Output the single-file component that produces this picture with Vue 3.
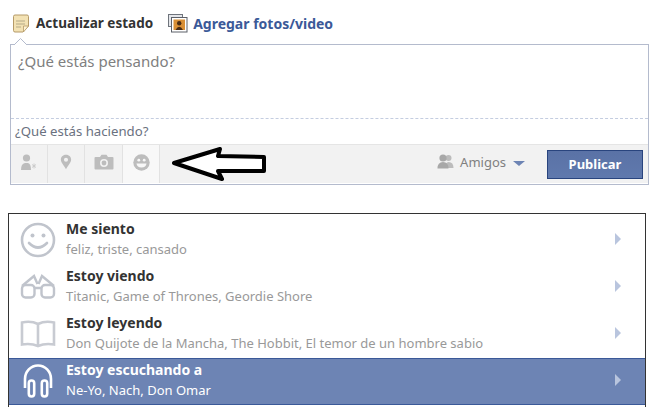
<template>
  <div class="page">
    <div class="tabs">
      <div class="tab tab--active">
        <svg class="tab__icon" width="18" height="19" viewBox="0 0 18 19">
          <path d="M1.5 2.5 Q1.5 1 3 1 H15 Q16.5 1 16.5 2.5 V12 L11 18 H3 Q1.5 18 1.5 16.5 Z" fill="#f3e2b4" stroke="#b59a68" />
          <path d="M4 7 H13 M4 10 H13 M4 13 H9" stroke="#b5a988" stroke-width="1.2" />
          <path d="M16.5 12 H11.5 V18 Z" fill="#fff4d6" stroke="#b59a68" stroke-width=".8" />
        </svg>
        <span>Actualizar estado</span>
      </div>
      <div class="tab tab--link">
        <svg class="tab__icon" width="20" height="19" viewBox="0 0 20 19">
          <rect x=".5" y=".5" width="14" height="12" fill="#e4e6ea" stroke="#6f747c" />
          <rect x="3.5" y="3.5" width="15.5" height="14.5" fill="#fff" stroke="#5c6068" />
          <rect x="5.5" y="5.5" width="11.5" height="10.5" fill="#d98f35" />
          <circle cx="11.2" cy="9.2" r="2.2" fill="#4a2c14" />
          <path d="M7.5 16 Q11.2 9.5 15 16 Z" fill="#4a2c14" />
        </svg>
        <span>Agregar fotos/video</span>
      </div>
    </div>

    <div class="composer">
      <svg class="composer__caret" width="13" height="7" viewBox="0 0 13 7">
        <path d="M0 7 L6.5 .5 L13 7" fill="#fff" stroke="#b4bbcd" />
      </svg>
      <div class="composer__input">¿Qué estás pensando?</div>
      <div class="composer__doing">¿Qué estás haciendo?</div>
      <div class="composer__bar">
        <div class="tool">
          <svg width="18" height="18" viewBox="0 0 18 18" fill="#bdbdbd">
            <circle cx="6.5" cy="5" r="3.6" />
            <path d="M1 17 Q1 10.5 5 10 H8 Q11 10.5 11 17 Z" />
            <path d="M14 10.5 V15.5 M12 11.5 L16 14.5 M16 11.5 L12 14.5" stroke="#c8c8c8" stroke-width=".9" />
          </svg>
        </div>
        <div class="tool">
          <svg width="12" height="18" viewBox="0 0 14 18">
            <path fill-rule="evenodd" d="M7 .5 C3 .5 1 3.4 1 6.2 C1 10 5 13.5 7 17.5 C9 13.5 13 10 13 6.2 C13 3.4 11 .5 7 .5 Z M7 4 A2.4 2.4 0 1 1 7 8.8 A2.4 2.4 0 1 1 7 4 Z" fill="#bdbdbd" />
          </svg>
        </div>
        <div class="tool tool--wide">
          <svg width="20" height="16" viewBox="0 0 20 16">
            <path fill-rule="evenodd" d="M1.5 3 H6 L7.5 .8 H12.5 L14 3 H18.5 Q19.5 3 19.5 4 V14.5 Q19.5 15.5 18.5 15.5 H1.5 Q.5 15.5 .5 14.5 V4 Q.5 3 1.5 3 Z M10 5 A4 4 0 1 0 10 13 A4 4 0 1 0 10 5 Z" fill="#bdbdbd" />
            <circle cx="10" cy="9" r="2.4" fill="#bdbdbd" />
          </svg>
        </div>
        <div class="tool tool--on">
          <svg width="17" height="17" viewBox="0 0 17 17">
            <circle cx="8.5" cy="8.5" r="8.2" fill="#bdbdbd" />
            <circle cx="5.8" cy="6.2" r="1.4" fill="#f8f8f8" />
            <circle cx="11.2" cy="6.2" r="1.4" fill="#f8f8f8" />
            <path d="M3.5 9.5 H13.5 Q13 13.5 8.5 13.5 Q4 13.5 3.5 9.5 Z" fill="#f8f8f8" />
          </svg>
        </div>
        <div class="composer__spacer"></div>
        <div class="audience">
          <svg width="17" height="15" viewBox="0 0 17 15" fill="#a8a8a8">
            <circle cx="11.5" cy="4" r="3" fill="#bcbcbc" />
            <path d="M8 14 Q8 8 11.5 8 Q16.5 8 16.5 14 Z" fill="#bcbcbc" />
            <circle cx="6" cy="4" r="3.6" />
            <path d="M.5 14.5 Q.5 8 6 8 Q11.5 8 11.5 14.5 Z" />
          </svg>
          <span class="audience__label">Amigos</span>
          <i class="audience__caret"></i>
        </div>
        <button class="publish" type="button">Publicar</button>
      </div>
    </div>

    <ul class="menu">
      <li v-for="item in items" :key="item.title" class="menu__row" :class="{ 'menu__row--on': item.active }">
        <div class="menu__icon">
          <svg v-if="item.icon === 'smile'" width="36" height="36" viewBox="0 0 36 36" fill="none" stroke="#c0c4cc" stroke-width="2.6">
            <circle cx="18" cy="18" r="16" />
            <circle cx="12.5" cy="13.5" r="2" fill="#c0c4cc" stroke="none" />
            <circle cx="23.5" cy="13.5" r="2" fill="#c0c4cc" stroke="none" />
            <path d="M9 21 Q18 30 27 21" stroke-linecap="round" />
          </svg>
          <svg v-else-if="item.icon === 'glasses'" width="36" height="26" viewBox="0 0 36 26" fill="none" stroke="#c0c4cc" stroke-width="2.4">
            <rect x="2" y="11" width="12.5" height="12.5" rx="3.5" />
            <rect x="21.5" y="11" width="12.5" height="12.5" rx="3.5" />
            <path d="M14.5 14 H21.5 M2 12 L14 2 L17.5 10 M34 12 L22 2 L18.5 10" />
          </svg>
          <svg v-else-if="item.icon === 'book'" width="36" height="28" viewBox="0 0 36 28" fill="none" stroke="#c8cbd2" stroke-width="2.6">
            <path d="M18 4 Q11 0.5 2 2.5 V24.5 Q11 23 18 26 Q25 23 34 24.5 V2.5 Q25 0.5 18 4 Z M18 4 V26" />
          </svg>
          <svg v-else width="30" height="34" viewBox="0 0 30 34" fill="none" stroke="#fff" stroke-width="2.6">
            <path d="M2 24 V15 A13 13.5 0 0 1 28 15 V24" />
            <rect x="5.8" y="16.5" width="5.4" height="16" rx="2.7" />
            <rect x="18.8" y="16.5" width="5.4" height="16" rx="2.7" />
          </svg>
        </div>
        <div class="menu__text">
          <div class="menu__title">{{ item.title }}</div>
          <div class="menu__sub">{{ item.sub }}</div>
        </div>
        <i class="menu__arrow"></i>
      </li>
    </ul>

    <svg class="hand-arrow" width="100" height="40" viewBox="0 0 100 40">
      <path d="M3 19 L49 5 L47 12 L93 13 L93 27 L47 27 L51 35 Z" fill="#fff" stroke="#000" stroke-width="4" stroke-linejoin="round" />
    </svg>
  </div>
</template>

<script setup>
const items = [
  { icon: 'smile', title: 'Me siento', sub: 'feliz, triste, cansado' },
  { icon: 'glasses', title: 'Estoy viendo', sub: 'Titanic, Game of Thrones, Geordie Shore' },
  { icon: 'book', title: 'Estoy leyendo', sub: 'Don Quijote de la Mancha, The Hobbit, El temor de un hombre sabio' },
  { icon: 'phones', title: 'Estoy escuchando a', sub: 'Ne-Yo, Nach, Don Omar', active: true },
];
</script>

<style>
html, body { background: #fff; }
</style>

<style scoped>
.page {
  position: relative;
  width: 656px;
  height: 420px;
  overflow: hidden;
  box-sizing: border-box;
  padding-top: 14px;
  background: #fff;
  font-family: "Noto Sans", "Open Sans", sans-serif;
  font-size: 13px;
  color: #333;
}

.tabs {
  display: flex;
  height: 30px;
  padding-left: 12px;
  gap: 15px;
}

.tab {
  display: flex;
  align-items: flex-start;
  gap: 6px;
  font-weight: 700;
  font-size: 13.5px;
  line-height: 19px;
  color: #333;
}

.tab--link {
  color: #3b5998;
  gap: 5px;
  font-size: 14px;
}

.composer {
  position: relative;
  box-sizing: border-box;
  width: 639px;
  height: 141px;
  margin-left: 10px;
  border: 1px solid #b4bbcd;
}

.composer__caret {
  position: absolute;
  left: 3px;
  top: -7px;
}

.composer__input {
  box-sizing: border-box;
  height: 74px;
  padding: 5px 7px;
  font-size: 15px;
  line-height: 22px;
  color: #808080;
  border-bottom: 1px dashed #c4cde0;
}

.composer__doing {
  height: 25px;
  padding-left: 4px;
  font-size: 13.2px;
  line-height: 25px;
  color: #6a7180;
}

.composer__bar {
  display: flex;
  align-items: stretch;
  height: 39px;
  background: #f2f2f2;
  border-top: 1px solid #e5e5e5;
  box-sizing: border-box;
}

.tool {
  display: flex;
  align-items: center;
  justify-content: center;
  box-sizing: border-box;
  width: 37px;
  padding-bottom: 4px;
  border-right: 1px solid #e2e2e2;
}

.tool--wide { width: 38px; }

.tool--on { background: #f8f8f8; }

.composer__spacer { flex: 1; }

.audience {
  display: flex;
  align-items: center;
  padding-right: 22px;
  padding-bottom: 5px;
  color: #808080;
}

.audience__label { margin: 0 7px 0 6px; }

.audience__caret {
  width: 0;
  height: 0;
  border-left: 6px solid transparent;
  border-right: 6px solid transparent;
  border-top: 5px solid #6d84b4;
  margin-top: 3px;
}

.publish {
  align-self: center;
  width: 96px;
  height: 29px;
  margin-right: 5px;
  padding: 0;
  border: 1px solid #29447e;
  background: linear-gradient(#5a72a6, #6079ad);
  color: #fff;
  font-family: inherit;
  font-size: 13px;
  font-weight: 700;
}

.menu {
  list-style: none;
  box-sizing: border-box;
  width: 638px;
  height: 194px;
  margin: 28px 0 0 8px;
  padding: 3px 0 0;
  border: 1px solid #333;
  border-bottom: 0;
}

.menu__row {
  display: flex;
  align-items: center;
  box-sizing: border-box;
  height: 47px;
  padding: 0 24px 4px 11px;
}

.menu__row--on {
  background: #6d84b4;
  border-top: 1px solid #3b5998;
  border-bottom: 1px solid #3b5998;
  padding-bottom: 4px;
}

.menu__icon {
  display: flex;
  align-items: center;
  justify-content: center;
  width: 36px;
  height: 36px;
  flex: none;
  margin-top: 2px;
}

.menu__text { flex: 1; margin-left: 10px; }

.menu__title {
  font-size: 14px;
  font-weight: 700;
  line-height: 20px;
  color: #333;
}

.menu__sub {
  font-size: 13px;
  line-height: 20px;
  color: #999;
}

.menu__row--on .menu__title,
.menu__row--on .menu__sub { color: #fff; }

.menu__arrow {
  width: 0;
  height: 0;
  border-top: 6px solid transparent;
  border-bottom: 6px solid transparent;
  border-left: 6px solid #b9c5de;
}

.hand-arrow {
  position: absolute;
  left: 171px;
  top: 144px;
}
</style>
